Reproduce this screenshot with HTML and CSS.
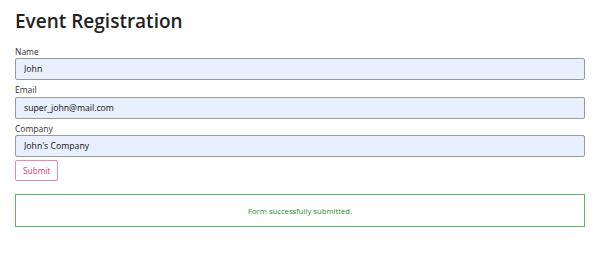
FILE: index.html
```html
<!DOCTYPE html>
<html lang="en">
<head>
<meta charset="UTF-8">
<meta name="viewport" content="width=device-width, initial-scale=1.0">
<title>Event Registration</title>
<link rel="stylesheet" href="styles.css">
</head>
<body>
<main class="page">
 <h1 class="page-title">Event Registration</h1>
 <form class="reg-form">
  <label class="field">
   <span class="field-label">Name</span>
   <input class="field-input" type="text" value="John">
  </label>
  <label class="field">
   <span class="field-label">Email</span>
   <input class="field-input" type="email" value="super_john@mail.com">
  </label>
  <label class="field">
   <span class="field-label">Company</span>
   <input class="field-input" type="text" value="John's Company">
  </label>
  <button class="submit-btn" type="button">Submit</button>
 </form>
 <div class="result">Form successfully submitted.</div>
</main>
</body>
</html>
```
FILE: styles.css
```css
body{margin:0;font-family:"Open Sans",Arial,sans-serif;color:#222;background:#fff}
.page{padding:0 15px}
.page-title{font-size:19px;font-weight:600;margin:0;padding-top:7px;line-height:28px}
.reg-form{display:flex;flex-direction:column;align-items:flex-start;gap:4px;margin-top:10.5px}
.field{display:flex;flex-direction:column;width:100%}
.field-label{font-size:8.5px;line-height:12.5px;color:#333}
.field-input{box-sizing:border-box;width:100%;height:22px;margin:0;padding:0 8px;font-family:inherit;font-size:8.7px;color:#111;background:#e8f0fe;border:1px solid #9a9a9a;border-radius:2px}
.submit-btn{margin-top:-1px;height:21px;padding:0 7px;font-family:inherit;font-size:8.3px;color:#d0456f;background:#fff;border:1px solid #e88aa6;border-radius:2px}
.result{margin-top:13px;height:33px;box-sizing:border-box;border:1px solid #5cb85c;display:flex;align-items:center;justify-content:center;font-size:7.7px;color:#2e8b2e}
```
